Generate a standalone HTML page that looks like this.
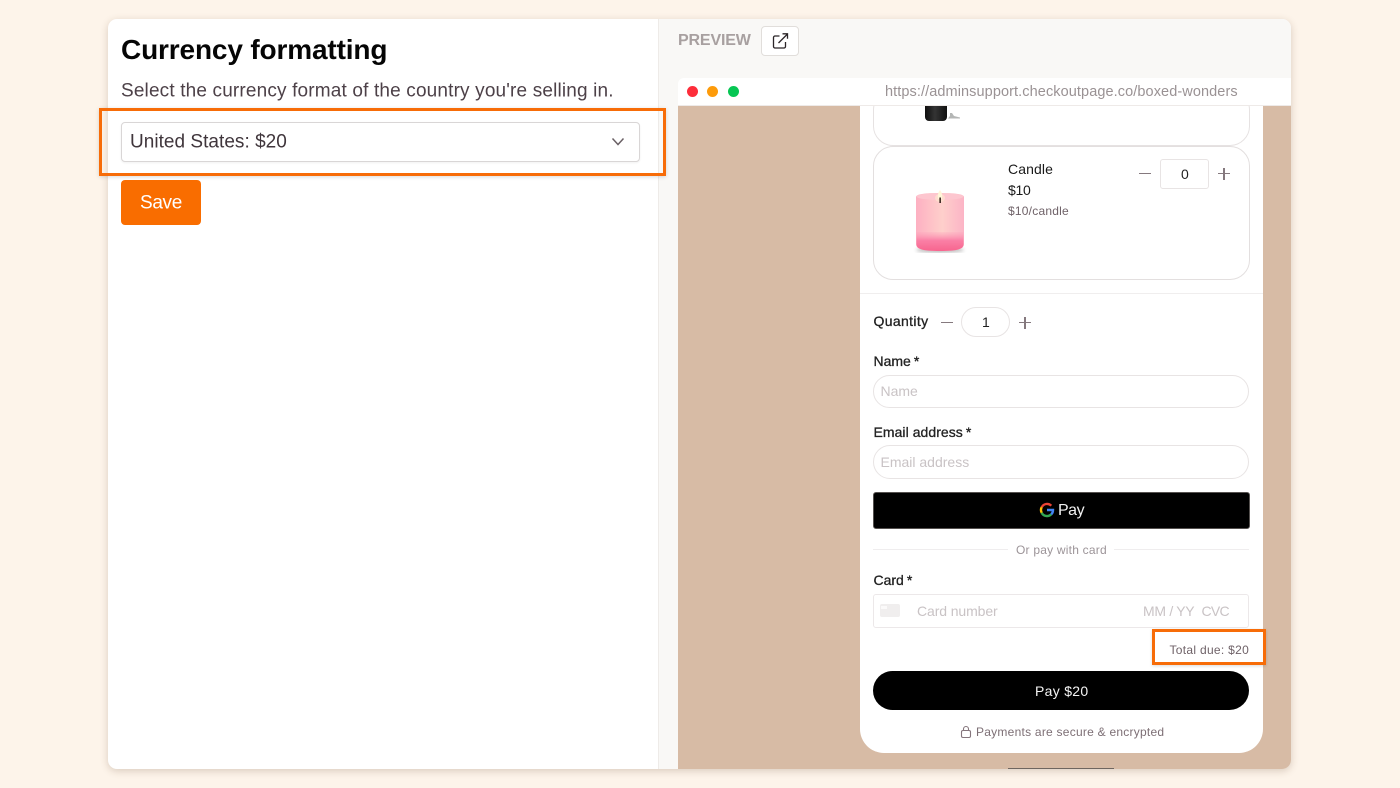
<!DOCTYPE html>
<html lang="en">
<head>
<meta charset="utf-8">
<title>Currency formatting</title>
<style>
html,body{margin:0;padding:0}
html{background:#fdf4ea}
body{width:1400px;height:788px;overflow:hidden;background:#fdf4ea;font-family:"Liberation Sans",sans-serif;position:relative;filter:blur(.3px)}
.a{position:absolute;box-sizing:border-box}
.t{position:absolute;white-space:nowrap;line-height:1;transform:translateY(-50%)}
.panel{left:108px;top:19px;width:1183px;height:750px;border-radius:9px;background:#fff;box-shadow:0 2px 8px rgba(90,60,30,.22);overflow:hidden}
.field{background:#fff;border:1px solid #e8e4e4}
.m{font-size:14px;color:#222;-webkit-text-stroke:.3px #222}
.m span{margin-left:3px}
.ln{background:#85797e}
</style>
</head>
<body>
<div class="a panel">
  <div class="a" style="left:550px;top:0;width:633px;height:750px;background:#f9f8f6;border-left:1px solid #eeebe8"></div>
  <div class="a" style="left:570px;top:59px;width:613px;height:28px;background:#fff;border-bottom:1px solid #eeeae8;border-radius:6px 0 0 0"></div>
  <div class="a" style="left:570px;top:87px;width:613px;height:663px;background:#d7bba5"></div>
</div>

<div class="t" style="left:121px;top:50px;font-size:28px;font-weight:bold;color:#050505;letter-spacing:-.15px">Currency formatting</div>
<div class="t" style="left:121px;top:91px;font-size:19px;color:#4d4148;letter-spacing:.16px">Select the currency format of the country you're selling in.</div>

<div class="a" style="left:121px;top:122px;width:519px;height:40px;background:#fff;border:1px solid #d9d6d6;border-radius:4px;box-shadow:0 1px 2px rgba(0,0,0,.06)"></div>
<div class="t" style="left:130px;top:142px;font-size:19px;color:#40363c;letter-spacing:.03px">United States: $20</div>
<svg class="a" style="left:610px;top:136px" width="16" height="12" viewBox="0 0 16 12"><path d="M2.500 2.500 L8 8.500 L13.500 2.500" fill="none" stroke="#6a6065" stroke-width="1.500"/></svg>
<div class="a" style="left:99px;top:108px;width:567px;height:68px;border:3px solid #f76c08;box-shadow:0 1px 4px rgba(0,0,0,.15)"></div>

<div class="a" style="left:121px;top:180px;width:80px;height:45px;background:#f96d00;border-radius:4px"></div>
<div class="t" style="left:140px;top:203px;font-size:19px;color:#fff;letter-spacing:-.35px">Save</div>

<div class="t" style="left:678px;top:41px;font-size:16px;font-weight:bold;color:#a8a0a0;letter-spacing:-.15px">PREVIEW</div>
<div class="a" style="left:761px;top:26px;width:38px;height:30px;background:#fff;border:1px solid #e1dedb;border-radius:4px"></div>
<svg class="a" style="left:771px;top:32px" width="18" height="18" viewBox="0 0 18 18" fill="none" stroke="#2b2528" stroke-width="1.300"><path d="M8.500 4H4a1.500 1.500 0 0 0-1.500 1.500v9A1.500 1.500 0 0 0 4 16h9a1.500 1.500 0 0 0 1.500-1.500V10"/><path d="M7.500 11 16.500 2M11.500 1.800h5v5"/></svg>

<div class="a" style="left:687px;top:85.500px;width:11px;height:11px;border-radius:50%;background:#fd2d3a"></div>
<div class="a" style="left:707px;top:85.500px;width:11px;height:11px;border-radius:50%;background:#fd9b0a"></div>
<div class="a" style="left:727.500px;top:85.500px;width:11px;height:11px;border-radius:50%;background:#06c653"></div>
<div class="t" style="left:885px;top:92px;font-size:14.500px;color:#9a9294;letter-spacing:.09px">https://adminsupport.checkoutpage.co/boxed-wonders</div>

<!-- checkout card -->
<div class="a" style="left:860px;top:106px;width:403px;height:647px;background:#fff;border-radius:0 0 24px 24px"></div>
<div class="a" style="left:873px;top:90px;width:377px;height:56px;border:1px solid #e6e2e2;border-radius:20px;background:#fff;clip-path:inset(16px -2px -2px -2px)"></div>
<div class="a" style="left:925px;top:106px;width:22px;height:15px;background:linear-gradient(90deg,#0e0e0e,#343434 45%,#111);border-radius:0 0 4px 4px"></div>
<svg class="a" style="left:946px;top:106px" width="16" height="14" viewBox="0 0 16 14"><path d="M4 7 6 7 8 10 14 11.500 14 12.500 2 12.500 4 10z" fill="#b4b6b5"/></svg>

<div class="a" style="left:873px;top:146px;width:377px;height:134px;border:1px solid #e3dfdf;border-radius:20px;background:#fff"></div>
<svg class="a" style="left:905px;top:185px" width="70" height="75" viewBox="0 0 70 75">
  <defs>
    <linearGradient id="c" x1="0" y1="0" x2="1" y2="0"><stop offset="0" stop-color="#fdb0c2"/><stop offset=".55" stop-color="#fecfcb"/><stop offset="1" stop-color="#fcb4c6"/></linearGradient>
    <linearGradient id="b" x1="0" y1="0" x2="0" y2="1"><stop offset="0" stop-color="#fc9db8" stop-opacity=".2"/><stop offset=".45" stop-color="#fa7fa5"/><stop offset="1" stop-color="#f7658f"/></linearGradient>
    <filter id="s"><feGaussianBlur stdDeviation="1.800"/></filter>
    <filter id="g"><feGaussianBlur stdDeviation=".35"/></filter>
  </defs>
  <ellipse cx="35" cy="65" rx="24" ry="2.500" fill="#7a7a7a" opacity=".55" filter="url(#s)"/>
  <g filter="url(#g)">
    <path d="M11 12c0-2.500 6-4 24-4s24 1.500 24 4v47c0 5-6 7-24 7s-24-2-24-7z" fill="url(#c)"/>
    <ellipse cx="35" cy="11.500" rx="23.500" ry="3.500" fill="#fdc6cf"/>
    <path d="M11.500 47h47v12c0 5-5 7-23.500 7s-23.500-2-23.500-7z" fill="url(#b)"/>
    <ellipse cx="35" cy="13" rx="5" ry="4" fill="#ffe6cf" opacity=".7"/>
    <path d="M35 5c2 2.500 2.600 5 1.800 9h-3.600c-.8-4 -.2-6.500 1.800-9z" fill="#fff6d8"/>
    <rect x="34.400" y="12.500" width="1.500" height="5.500" fill="#2f1f18"/>
  </g>
</svg>
<div class="t" style="left:1008px;top:168.500px;font-size:14px;color:#1a1a1a;letter-spacing:.1px">Candle</div>
<div class="t" style="left:1008px;top:190px;font-size:14px;color:#1a1a1a;letter-spacing:-.3px">$10</div>
<div class="t" style="left:1008px;top:211px;font-size:12px;color:#6f6268;letter-spacing:.22px">$10/candle</div>
<div class="a ln" style="left:1139px;top:173px;width:12px;height:1.300px"></div>
<div class="a field" style="left:1160px;top:159px;width:49px;height:30px;border-radius:3px"></div>
<div class="t" style="left:1181px;top:173.500px;font-size:14px;color:#1f1f1f">0</div>
<div class="a ln" style="left:1218px;top:173px;width:12px;height:1.300px"></div>
<div class="a ln" style="left:1223.400px;top:167.500px;width:1.300px;height:12px"></div>

<div class="a" style="left:860px;top:293px;width:403px;height:1px;background:#f0eeee"></div>
<div class="t m" style="left:873.500px;top:321px;letter-spacing:.35px">Quantity</div>
<div class="a ln" style="left:941px;top:322px;width:12px;height:1.300px"></div>
<div class="a field" style="left:961px;top:307px;width:49px;height:30px;border-radius:15px"></div>
<div class="t" style="left:982px;top:322px;font-size:14px;color:#1f1f1f">1</div>
<div class="a ln" style="left:1019px;top:322px;width:12px;height:1.300px"></div>
<div class="a ln" style="left:1024.400px;top:316.500px;width:1.300px;height:12px"></div>

<div class="t m" style="left:873.500px;top:361px">Name<span>*</span></div>
<div class="a field" style="left:873px;top:375px;width:376px;height:33px;border-radius:17px"></div>
<div class="t" style="left:880.500px;top:391px;font-size:14px;color:#c9c3c5;letter-spacing:0">Name</div>

<div class="t m" style="left:873.500px;top:431.500px;letter-spacing:.05px">Email address<span>*</span></div>
<div class="a field" style="left:873px;top:445px;width:376px;height:34px;border-radius:17px"></div>
<div class="t" style="left:880.500px;top:462px;font-size:14px;color:#c9c3c5;letter-spacing:0">Email address</div>

<div class="a" style="left:873px;top:492px;width:376.500px;height:37px;background:#000;border:1px solid #55514f;border-radius:3px"></div>
<svg class="a" style="left:1038.500px;top:501.500px" width="16" height="16" viewBox="0 0 16 16" fill="none" stroke-width="2.400">
  <path d="M12.300 3.700A6 6 0 0 0 2.700 5.200" stroke="#ea4335"/>
  <path d="M2.700 5.200a6 6 0 0 0 0 5.600" stroke="#fbbc04"/>
  <path d="M2.700 10.800a6 6 0 0 0 9.500 1.600" stroke="#34a853"/>
  <path d="M12.200 12.400A6 6 0 0 0 14 8H8" stroke="#4285f4"/>
</svg>
<div class="t" style="left:1058px;top:510.500px;font-size:16px;color:#f0f0f0;letter-spacing:-.5px">Pay</div>

<div class="a" style="left:873px;top:549px;width:135px;height:1px;background:#efedee"></div>
<div class="a" style="left:1114px;top:549px;width:135px;height:1px;background:#efedee"></div>
<div class="t" style="left:1016px;top:549.500px;font-size:12px;color:#9c9498;letter-spacing:.22px">Or pay with card</div>

<div class="t m" style="left:873.500px;top:580px">Card<span>*</span></div>
<div class="a" style="left:873px;top:594px;width:376px;height:33.500px;background:#fff;border:1px solid #ece8e9;border-radius:3px"></div>
<div class="a" style="left:880px;top:604px;width:20px;height:13px;background:#f0eeee;border-radius:2px"></div>
<div class="a" style="left:881px;top:606px;width:6px;height:3px;background:#fbfafa"></div>
<div class="t" style="left:917px;top:611px;font-size:14px;color:#c9c3c5;letter-spacing:-.1px">Card number</div>
<div class="t" style="left:1143px;top:611px;font-size:14px;color:#c9c3c5;letter-spacing:-.3px">MM / YY</div>
<div class="t" style="left:1201.500px;top:611px;font-size:14px;color:#c9c3c5;letter-spacing:-.7px">CVC</div>

<div class="t" style="left:1169.500px;top:649.500px;font-size:12px;color:#6f6268;letter-spacing:.3px">Total due: $20</div>
<div class="a" style="left:1152px;top:629px;width:114px;height:36px;border:3px solid #f76c08;box-shadow:0 1px 3px rgba(0,0,0,.15)"></div>

<div class="a" style="left:873px;top:671px;width:376px;height:39px;background:#000;border-radius:20px"></div>
<div class="t" style="left:1035px;top:690.500px;font-size:14px;color:#f4f4f4;letter-spacing:.3px">Pay $20</div>

<svg class="a" style="left:960px;top:725px" width="12" height="14" viewBox="0 0 12 14" fill="none" stroke="#85767d" stroke-width="1.100"><rect x="1.500" y="5.500" width="9" height="7" rx="1.500"/><path d="M3.500 5.500V4a2.500 2.500 0 0 1 5 0v1.500"/></svg>
<div class="t" style="left:976px;top:732px;font-size:12px;color:#7d6f75;letter-spacing:.245px">Payments are secure &amp; encrypted</div>

<div class="a" style="left:1008px;top:767.500px;width:106px;height:1.500px;background:#6f6660"></div>
</body>
</html>
